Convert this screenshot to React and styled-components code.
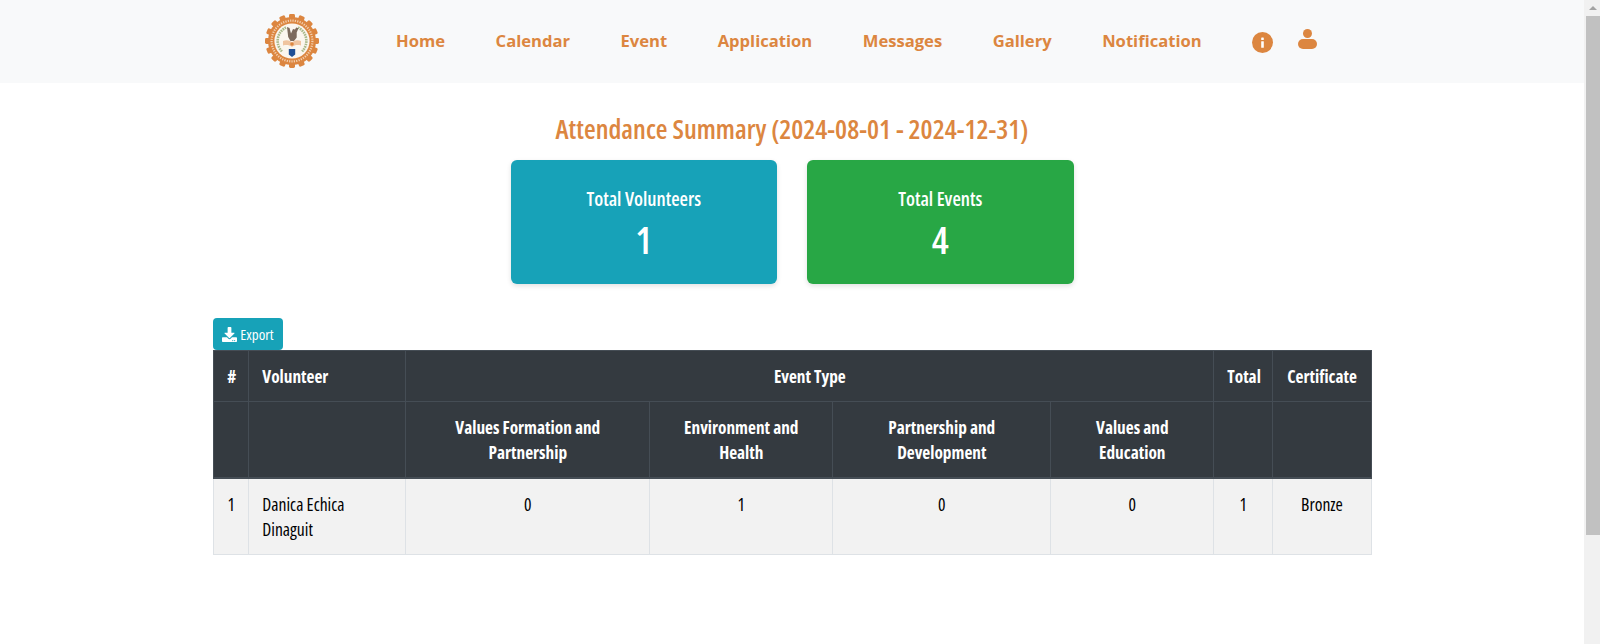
import React from 'react';
import styled, { createGlobalStyle } from 'styled-components';
import { FaDownload } from 'react-icons/fa';

const GlobalStyle = createGlobalStyle`
  html, body { margin: 0; padding: 0; background: #fff; }
  body {
    font-family: "Open Sans", sans-serif;
    font-stretch: 75%;
  }
`;

const orange = '#dc8640';

const Shell = styled.div`
  display: flex;
  height: 100vh;
  overflow: hidden;
`;

const Page = styled.div`
  flex: 1;
  min-width: 0;
`;

const ScrollTrack = styled.aside`
  width: 16px;
  background: #f1f1f1;
`;

const ScrollArrow = styled.div`
  height: 16px;
  display: flex;
  align-items: center;
  justify-content: center;
  padding-left: 2px;
  box-sizing: border-box;

  &::before {
    content: '';
    border-left: 4px solid transparent;
    border-right: 4px solid transparent;
    border-bottom: 4px solid #a3a3a3;
  }
`;

const ScrollThumb = styled.div`
  height: 519px;
  margin-left: 2px;
  background: #c1c1c1;
`;

const Nav = styled.header`
  height: 83px;
  box-sizing: border-box;
  padding: 0 0 2px 264px;
  background: #f8f9fa;
  display: flex;
  align-items: center;
`;

const NavLinks = styled.nav`
  display: flex;
  align-items: center;
  gap: 50.5px;
  margin: 0 0 1px 76px;
`;

const NavLink = styled.a`
  font-family: "Open Sans", sans-serif;
  font-stretch: 100%;
  font-weight: 700;
  font-size: 16.6px;
  color: ${orange};
`;

const NavIcons = styled.div`
  display: flex;
  align-items: center;
  gap: 25px;
`;

const InfoWrap = styled.span`
  display: flex;
  margin-top: 4px;
`;

const UserWrap = styled.span`
  display: flex;
  margin-bottom: 3px;
`;

const Title = styled.h2`
  margin: 28px 0 0;
  text-align: center;
  font-size: 26.9px;
  line-height: 36px;
  font-weight: 550;
  color: ${orange};
`;

const Cards = styled.div`
  display: flex;
  justify-content: center;
  gap: 30px;
  margin-top: 13px;
`;

const Card = styled.div`
  width: 266.5px;
  height: 124px;
  border-radius: 6px;
  background: ${({ $bg }) => $bg};
  color: #fff;
  text-align: center;
  box-shadow: 0 2px 5px rgba(0, 0, 0, 0.12);
  padding-top: 26px;
  box-sizing: border-box;
`;

const CardLabel = styled.div`
  font-size: 19.3px;
  line-height: 26px;
  font-weight: 600;
`;

const CardValue = styled.div`
  margin-top: 3px;
  font-size: 38px;
  line-height: 48px;
  font-weight: 600;
`;

const Content = styled.main`
  width: 1157.4px;
  margin: 34px auto 0;
`;

const ExportButton = styled.button`
  display: flex;
  align-items: center;
  gap: 3px;
  height: 32px;
  width: 70px;
  padding: 0 9px;
  border: 0;
  border-radius: 4px;
  background: #17a2b8;
  color: #fff;
  font-family: inherit;
  font-stretch: 75%;
  font-size: 15px;
  font-weight: 500;
  white-space: nowrap;
`;

const Table = styled.table`
  width: 100%;
  table-layout: fixed;
  border-collapse: collapse;
  font-size: 17.6px;
  line-height: 25.6px;
`;

const Col = styled.col`
  width: ${({ $w }) => $w}px;
`;

const Th = styled.th`
  background: #343a40;
  color: #fff;
  border: 1px solid #454d55;
  border-bottom-width: ${({ $last }) => ($last ? 2 : 1)}px;
  padding: 13px 13px 11px;
  font-size: 17.3px;
  font-weight: 700;
  text-align: ${({ $left }) => ($left ? 'left' : 'center')};
  vertical-align: top;
`;

const Td = styled.td`
  background: #f2f2f2;
  color: #000;
  border: 1px solid #dee2e6;
  padding: 13px 13px 11px;
  text-align: ${({ $left }) => ($left ? 'left' : 'center')};
  vertical-align: top;
`;

const InfoIcon = () => (
  <svg width="21" height="21" viewBox="0 0 21 21">
    <circle cx="10.5" cy="10.5" r="10.5" fill={orange} />
    <rect x="9.2" y="5.4" width="2.6" height="2.6" rx="0.6" fill="#fff" />
    <rect x="9.2" y="9.2" width="2.6" height="6.6" rx="0.4" fill="#fff" />
  </svg>
);

const UserIcon = () => (
  <svg width="19" height="20" viewBox="0 0 19 20" fill={orange}>
    <circle cx="9.5" cy="4.5" r="4.5" />
    <rect x="0" y="10" width="19" height="10" rx="5" />
  </svg>
);

const Logo = () => (
  <svg width="56" height="56" viewBox="0 0 56 56">
    {Array.from({ length: 16 }).map((_, i) => (
      <rect key={i} x="25" y="1" width="6" height="7" rx="1.4" fill={orange} transform={`rotate(${i * 22.5} 28 28)`} />
    ))}
    <circle cx="28" cy="28" r="24" fill={orange} />
    <circle cx="28" cy="28" r="20.4" fill="none" stroke="#f3cfae" strokeWidth="2.2" strokeDasharray="1.2 1.2" />
    <circle cx="28" cy="28" r="17.6" fill="#fbf6ef" />
    <path d="M22 14.500a15 15 0 0 0-4 24" fill="none" stroke="#a9b98a" strokeWidth="2.6" strokeDasharray="1.6 .8" />
    <path d="M34 14.500a15 15 0 0 1 4 24" fill="none" stroke="#a9b98a" strokeWidth="2.6" strokeDasharray="1.6 .8" />
    <path d="M23 14l2.500 1 1.500 5.500 2-4.500 2 .5 1.200-2 2.300.8-1.800 4.200v5l-2.700 3.500h-3.500l-2.300-4z" fill="#7d6a5d" />
    <path d="M19 28c3.500-1.500 6.500-1 9 1.500 2.500-2.500 5.500-3 9-1.500v4.500c-3.500-1-6.500-.5-9 1.500-2.500-2-5.500-2.500-9-1.500z" fill="#f0c4a0" />
    <circle cx="28" cy="31" r="1.800" fill={orange} />
    <path d="M24.800 36h6.400v5.500l-3.200 2.500-3.200-2.500z" fill="#1f4f95" />
  </svg>
);

const columns = [35, 157, 244, 183, 218, 163, 59, 98.4];
const links = ['Home', 'Calendar', 'Event', 'Application', 'Messages', 'Gallery', 'Notification'];

export default function App() {
  return (
    <Shell>
      <GlobalStyle />
      <Page>
        <Nav>
          <Logo />
          <NavLinks>
            {links.map((l) => (
              <NavLink key={l}>{l}</NavLink>
            ))}
            <NavIcons>
              <InfoWrap>
                <InfoIcon />
              </InfoWrap>
              <UserWrap>
                <UserIcon />
              </UserWrap>
            </NavIcons>
          </NavLinks>
        </Nav>
        <Title>Attendance Summary (2024-08-01 - 2024-12-31)</Title>
        <Cards>
          <Card $bg="#17a2b8">
            <CardLabel>Total Volunteers</CardLabel>
            <CardValue>1</CardValue>
          </Card>
          <Card $bg="#28a745">
            <CardLabel>Total Events</CardLabel>
            <CardValue>4</CardValue>
          </Card>
        </Cards>
        <Content>
          <ExportButton>
            <FaDownload size={15} /> Export
          </ExportButton>
          <Table>
            <colgroup>
              {columns.map((w, i) => (
                <Col key={i} $w={w} />
              ))}
            </colgroup>
            <thead>
              <tr>
                <Th>#</Th>
                <Th $left>Volunteer</Th>
                <Th colSpan={4}>Event Type</Th>
                <Th>Total</Th>
                <Th>Certificate</Th>
              </tr>
              <tr>
                <Th $last />
                <Th $last />
                <Th $last>Values Formation and Partnership</Th>
                <Th $last>Environment and Health</Th>
                <Th $last>Partnership and Development</Th>
                <Th $last>Values and Education</Th>
                <Th $last />
                <Th $last />
              </tr>
            </thead>
            <tbody>
              <tr>
                <Td>1</Td>
                <Td $left>Danica Echica Dinaguit</Td>
                <Td>0</Td>
                <Td>1</Td>
                <Td>0</Td>
                <Td>0</Td>
                <Td>1</Td>
                <Td>Bronze</Td>
              </tr>
            </tbody>
          </Table>
        </Content>
      </Page>
      <ScrollTrack>
        <ScrollArrow />
        <ScrollThumb />
      </ScrollTrack>
    </Shell>
  );
}
